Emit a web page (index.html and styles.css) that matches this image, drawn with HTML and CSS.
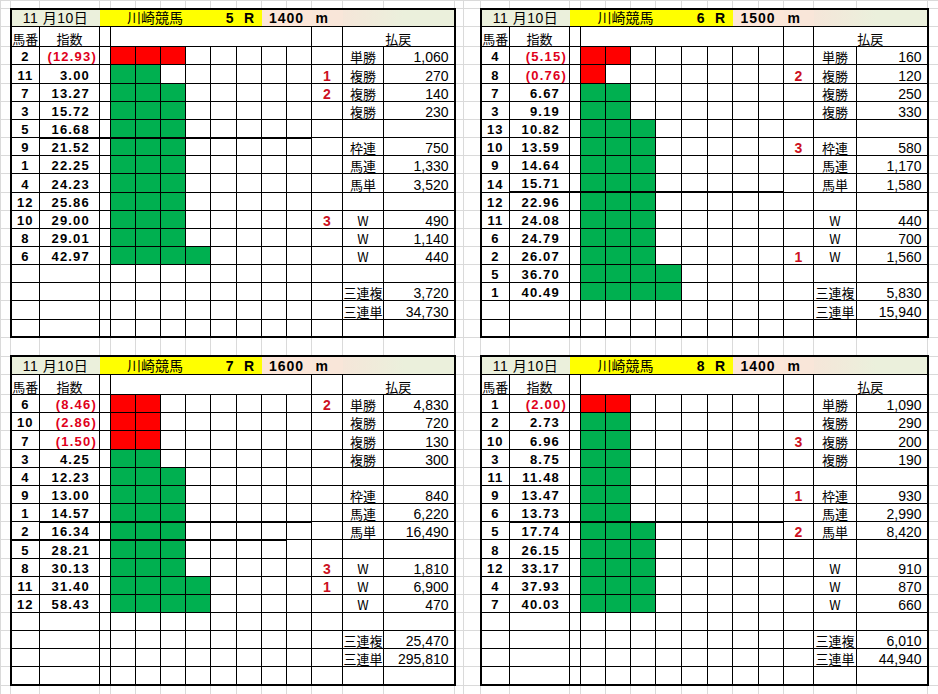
FILE: index.html
```html
<!DOCTYPE html>
<html lang="ja">
<head>
<meta charset="utf-8">
<title>川崎競馬 指数</title>
<link rel="stylesheet" href="styles.css">
</head>
<body>
<table class="sheet">
<colgroup>
<col class="c-m"><col class="c-no"><col class="c-ix"><col class="c-nr"><col class="c-b"><col class="c-b"><col class="c-b"><col class="c-b"><col class="c-b26"><col class="c-b"><col class="c-b"><col class="c-b"><col class="c-mk"><col class="c-lb"><col class="c-v">
<col class="c-g1"><col class="c-g2">
<col class="c-no"><col class="c-ix"><col class="c-nr"><col class="c-b"><col class="c-b"><col class="c-b"><col class="c-b26"><col class="c-b26"><col class="c-b"><col class="c-b26"><col class="c-b"><col class="c-mk2"><col class="c-lb2"><col class="c-v">
<col class="c-m2">
</colgroup>
<tbody>
<tr class="top"><td></td><td></td><td></td><td></td><td></td><td></td><td></td><td></td><td></td><td></td><td></td><td></td><td></td><td></td><td></td><td></td><td></td><td></td><td></td><td></td><td></td><td></td><td></td><td></td><td></td><td></td><td></td><td></td><td></td><td></td><td></td><td></td></tr>

<tr class="t">
<td></td>
<td class="date" colspan="2">11 月10日</td><td class="ven" colspan="5">川崎競馬</td><td class="rno">5</td><td class="rr">R</td><td class="dist" colspan="2">1400</td><td class="unit">m</td><td class="rest" colspan="2"></td>
<td></td><td></td>
<td class="date" colspan="2">11 月10日</td><td class="ven" colspan="5">川崎競馬</td><td class="rno">6</td><td class="rr">R</td><td class="dist" colspan="2">1500</td><td class="unit">m</td><td class="rest" colspan="2"></td>
<td></td>
</tr>
<tr class="h">
<td></td>
<td class="hn">馬番</td><td class="hx">指数</td><td class="hw"></td><td class="hb" colspan="8"></td><td class="hm"></td><td class="hp" colspan="2">払戻</td>
<td></td><td></td>
<td class="hn">馬番</td><td class="hx">指数</td><td class="hw"></td><td class="hb" colspan="8"></td><td class="hm"></td><td class="hp" colspan="2">払戻</td>
<td></td>
</tr>

<tr class="d">
<td></td>
<td>2</td><td class="neg">(12.93)</td><td></td>
<td class="r"></td><td class="r"></td><td class="r"></td><td></td><td></td><td></td><td></td><td></td>
<td></td><td>単勝</td><td>1,060</td>
<td></td><td></td>
<td>4</td><td class="neg">(5.15)</td><td></td>
<td class="r"></td><td class="r"></td><td></td><td></td><td></td><td></td><td></td><td></td>
<td></td><td>単勝</td><td>160</td>
<td></td>
</tr>
<tr class="d">
<td></td>
<td>11</td><td>3.00</td><td></td>
<td class="g"></td><td class="g"></td><td></td><td></td><td></td><td></td><td></td><td></td>
<td>1</td><td>複勝</td><td>270</td>
<td></td><td></td>
<td>8</td><td class="neg">(0.76)</td><td></td>
<td class="r"></td><td></td><td></td><td></td><td></td><td></td><td></td><td></td>
<td>2</td><td>複勝</td><td>120</td>
<td></td>
</tr>
<tr class="d">
<td></td>
<td>7</td><td>13.27</td><td></td>
<td class="g"></td><td class="g"></td><td class="g"></td><td></td><td></td><td></td><td></td><td></td>
<td>2</td><td>複勝</td><td>140</td>
<td></td><td></td>
<td>7</td><td>6.67</td><td></td>
<td class="g"></td><td class="g"></td><td></td><td></td><td></td><td></td><td></td><td></td>
<td></td><td>複勝</td><td>250</td>
<td></td>
</tr>
<tr class="d">
<td></td>
<td>3</td><td>15.72</td><td></td>
<td class="g"></td><td class="g"></td><td class="g"></td><td></td><td></td><td></td><td></td><td></td>
<td></td><td>複勝</td><td>230</td>
<td></td><td></td>
<td>3</td><td>9.19</td><td></td>
<td class="g"></td><td class="g"></td><td></td><td></td><td></td><td></td><td></td><td></td>
<td></td><td>複勝</td><td>330</td>
<td></td>
</tr>
<tr class="d">
<td></td>
<td>5</td><td class="s">16.68</td><td class="s"></td>
<td class="g s"></td><td class="g s"></td><td class="g s"></td><td class="s"></td><td class="s"></td><td class="s"></td><td class="s"></td><td class="s"></td>
<td></td><td></td><td></td>
<td></td><td></td>
<td>13</td><td>10.82</td><td></td>
<td class="g"></td><td class="g"></td><td class="g"></td><td></td><td></td><td></td><td></td><td></td>
<td></td><td></td><td></td>
<td></td>
</tr>
<tr class="d">
<td></td>
<td>9</td><td>21.52</td><td></td>
<td class="g"></td><td class="g"></td><td class="g"></td><td></td><td></td><td></td><td></td><td></td>
<td></td><td>枠連</td><td>750</td>
<td></td><td></td>
<td>10</td><td>13.59</td><td></td>
<td class="g"></td><td class="g"></td><td class="g"></td><td></td><td></td><td></td><td></td><td></td>
<td>3</td><td>枠連</td><td>580</td>
<td></td>
</tr>
<tr class="d">
<td></td>
<td>1</td><td>22.25</td><td></td>
<td class="g"></td><td class="g"></td><td class="g"></td><td></td><td></td><td></td><td></td><td></td>
<td></td><td>馬連</td><td>1,330</td>
<td></td><td></td>
<td>9</td><td>14.64</td><td></td>
<td class="g"></td><td class="g"></td><td class="g"></td><td></td><td></td><td></td><td></td><td></td>
<td></td><td>馬連</td><td>1,170</td>
<td></td>
</tr>
<tr class="d">
<td></td>
<td>4</td><td>24.23</td><td></td>
<td class="g"></td><td class="g"></td><td class="g"></td><td></td><td></td><td></td><td></td><td></td>
<td></td><td>馬単</td><td>3,520</td>
<td></td><td></td>
<td>14</td><td class="s">15.71</td><td class="s"></td>
<td class="g s"></td><td class="g s"></td><td class="g s"></td><td class="s"></td><td class="s"></td><td class="s"></td><td class="s"></td><td class="s"></td>
<td></td><td>馬単</td><td>1,580</td>
<td></td>
</tr>
<tr class="d">
<td></td>
<td>12</td><td>25.86</td><td></td>
<td class="g"></td><td class="g"></td><td class="g"></td><td></td><td></td><td></td><td></td><td></td>
<td></td><td></td><td></td>
<td></td><td></td>
<td>12</td><td>22.96</td><td></td>
<td class="g"></td><td class="g"></td><td class="g"></td><td></td><td></td><td></td><td></td><td></td>
<td></td><td></td><td></td>
<td></td>
</tr>
<tr class="d">
<td></td>
<td>10</td><td>29.00</td><td></td>
<td class="g"></td><td class="g"></td><td class="g"></td><td></td><td></td><td></td><td></td><td></td>
<td>3</td><td>W</td><td>490</td>
<td></td><td></td>
<td>11</td><td>24.08</td><td></td>
<td class="g"></td><td class="g"></td><td class="g"></td><td></td><td></td><td></td><td></td><td></td>
<td></td><td>W</td><td>440</td>
<td></td>
</tr>
<tr class="d">
<td></td>
<td>8</td><td>29.01</td><td></td>
<td class="g"></td><td class="g"></td><td class="g"></td><td></td><td></td><td></td><td></td><td></td>
<td></td><td>W</td><td>1,140</td>
<td></td><td></td>
<td>6</td><td>24.79</td><td></td>
<td class="g"></td><td class="g"></td><td class="g"></td><td></td><td></td><td></td><td></td><td></td>
<td></td><td>W</td><td>700</td>
<td></td>
</tr>
<tr class="d">
<td></td>
<td>6</td><td>42.97</td><td></td>
<td class="g"></td><td class="g"></td><td class="g"></td><td class="g"></td><td></td><td></td><td></td><td></td>
<td></td><td>W</td><td>440</td>
<td></td><td></td>
<td>2</td><td>26.07</td><td></td>
<td class="g"></td><td class="g"></td><td class="g"></td><td></td><td></td><td></td><td></td><td></td>
<td>1</td><td>W</td><td>1,560</td>
<td></td>
</tr>
<tr class="d">
<td></td>
<td></td><td></td><td></td>
<td></td><td></td><td></td><td></td><td></td><td></td><td></td><td></td>
<td></td><td></td><td></td>
<td></td><td></td>
<td>5</td><td>36.70</td><td></td>
<td class="g"></td><td class="g"></td><td class="g"></td><td class="g"></td><td></td><td></td><td></td><td></td>
<td></td><td></td><td></td>
<td></td>
</tr>
<tr class="d">
<td></td>
<td></td><td></td><td></td>
<td></td><td></td><td></td><td></td><td></td><td></td><td></td><td></td>
<td></td><td>三連複</td><td>3,720</td>
<td></td><td></td>
<td>1</td><td>40.49</td><td></td>
<td class="g"></td><td class="g"></td><td class="g"></td><td class="g"></td><td></td><td></td><td></td><td></td>
<td></td><td>三連複</td><td>5,830</td>
<td></td>
</tr>
<tr class="d">
<td></td>
<td></td><td></td><td></td>
<td></td><td></td><td></td><td></td><td></td><td></td><td></td><td></td>
<td></td><td>三連単</td><td>34,730</td>
<td></td><td></td>
<td></td><td></td><td></td>
<td></td><td></td><td></td><td></td><td></td><td></td><td></td><td></td>
<td></td><td>三連単</td><td>15,940</td>
<td></td>
</tr>
<tr class="d end">
<td></td>
<td></td><td></td><td></td>
<td></td><td></td><td></td><td></td><td></td><td></td><td></td><td></td>
<td></td><td></td><td></td>
<td></td><td></td>
<td></td><td></td><td></td>
<td></td><td></td><td></td><td></td><td></td><td></td><td></td><td></td>
<td></td><td></td><td></td>
<td></td>
</tr>

<tr class="gap"><td></td><td></td><td></td><td></td><td></td><td></td><td></td><td></td><td></td><td></td><td></td><td></td><td></td><td></td><td></td><td></td><td></td><td></td><td></td><td></td><td></td><td></td><td></td><td></td><td></td><td></td><td></td><td></td><td></td><td></td><td></td><td></td></tr>

<tr class="t">
<td></td>
<td class="date" colspan="2">11 月10日</td><td class="ven" colspan="5">川崎競馬</td><td class="rno">7</td><td class="rr">R</td><td class="dist" colspan="2">1600</td><td class="unit">m</td><td class="rest" colspan="2"></td>
<td></td><td></td>
<td class="date" colspan="2">11 月10日</td><td class="ven" colspan="5">川崎競馬</td><td class="rno">8</td><td class="rr">R</td><td class="dist" colspan="2">1400</td><td class="unit">m</td><td class="rest" colspan="2"></td>
<td></td>
</tr>
<tr class="h">
<td></td>
<td class="hn">馬番</td><td class="hx">指数</td><td class="hw"></td><td class="hb" colspan="8"></td><td class="hm"></td><td class="hp" colspan="2">払戻</td>
<td></td><td></td>
<td class="hn">馬番</td><td class="hx">指数</td><td class="hw"></td><td class="hb" colspan="8"></td><td class="hm"></td><td class="hp" colspan="2">払戻</td>
<td></td>
</tr>

<tr class="d">
<td></td>
<td>6</td><td class="neg">(8.46)</td><td></td>
<td class="r"></td><td class="r"></td><td></td><td></td><td></td><td></td><td></td><td></td>
<td>2</td><td>単勝</td><td>4,830</td>
<td></td><td></td>
<td>1</td><td class="neg">(2.00)</td><td></td>
<td class="r"></td><td class="r"></td><td></td><td></td><td></td><td></td><td></td><td></td>
<td></td><td>単勝</td><td>1,090</td>
<td></td>
</tr>
<tr class="d">
<td></td>
<td>10</td><td class="neg">(2.86)</td><td></td>
<td class="r"></td><td class="r"></td><td></td><td></td><td></td><td></td><td></td><td></td>
<td></td><td>複勝</td><td>720</td>
<td></td><td></td>
<td>2</td><td>2.73</td><td></td>
<td class="g"></td><td class="g"></td><td></td><td></td><td></td><td></td><td></td><td></td>
<td></td><td>複勝</td><td>290</td>
<td></td>
</tr>
<tr class="d">
<td></td>
<td>7</td><td class="neg">(1.50)</td><td></td>
<td class="r"></td><td class="r"></td><td></td><td></td><td></td><td></td><td></td><td></td>
<td></td><td>複勝</td><td>130</td>
<td></td><td></td>
<td>10</td><td>6.96</td><td></td>
<td class="g"></td><td class="g"></td><td></td><td></td><td></td><td></td><td></td><td></td>
<td>3</td><td>複勝</td><td>200</td>
<td></td>
</tr>
<tr class="d">
<td></td>
<td>3</td><td>4.25</td><td></td>
<td class="g"></td><td class="g"></td><td></td><td></td><td></td><td></td><td></td><td></td>
<td></td><td>複勝</td><td>300</td>
<td></td><td></td>
<td>3</td><td>8.75</td><td></td>
<td class="g"></td><td class="g"></td><td></td><td></td><td></td><td></td><td></td><td></td>
<td></td><td>複勝</td><td>190</td>
<td></td>
</tr>
<tr class="d">
<td></td>
<td>4</td><td>12.23</td><td></td>
<td class="g"></td><td class="g"></td><td class="g"></td><td></td><td></td><td></td><td></td><td></td>
<td></td><td></td><td></td>
<td></td><td></td>
<td>11</td><td>11.48</td><td></td>
<td class="g"></td><td class="g"></td><td></td><td></td><td></td><td></td><td></td><td></td>
<td></td><td></td><td></td>
<td></td>
</tr>
<tr class="d">
<td></td>
<td>9</td><td>13.00</td><td></td>
<td class="g"></td><td class="g"></td><td class="g"></td><td></td><td></td><td></td><td></td><td></td>
<td></td><td>枠連</td><td>840</td>
<td></td><td></td>
<td>9</td><td>13.47</td><td></td>
<td class="g"></td><td class="g"></td><td></td><td></td><td></td><td></td><td></td><td></td>
<td>1</td><td>枠連</td><td>930</td>
<td></td>
</tr>
<tr class="d">
<td></td>
<td>1</td><td class="s">14.57</td><td class="s"></td>
<td class="g s"></td><td class="g s"></td><td class="g s"></td><td class="s"></td><td class="s"></td><td class="s"></td><td class="s"></td><td class="s"></td>
<td></td><td>馬連</td><td>6,220</td>
<td></td><td></td>
<td>6</td><td class="s">13.73</td><td class="s"></td>
<td class="g s"></td><td class="g s"></td><td class="s"></td><td class="s"></td><td class="s"></td><td class="s"></td><td class="s"></td><td class="s"></td>
<td></td><td>馬連</td><td>2,990</td>
<td></td>
</tr>
<tr class="d">
<td></td>
<td class="s">2</td><td class="s">16.34</td><td class="s"></td>
<td class="g s"></td><td class="g s"></td><td class="g s"></td><td class="s"></td><td class="s"></td><td class="s"></td><td class="s"></td><td></td>
<td></td><td>馬単</td><td>16,490</td>
<td></td><td></td>
<td>5</td><td>17.74</td><td></td>
<td class="g"></td><td class="g"></td><td class="g"></td><td></td><td></td><td></td><td></td><td></td>
<td>2</td><td>馬単</td><td>8,420</td>
<td></td>
</tr>
<tr class="d">
<td></td>
<td>5</td><td>28.21</td><td></td>
<td class="g"></td><td class="g"></td><td class="g"></td><td></td><td></td><td></td><td></td><td></td>
<td></td><td></td><td></td>
<td></td><td></td>
<td>8</td><td>26.15</td><td></td>
<td class="g"></td><td class="g"></td><td class="g"></td><td></td><td></td><td></td><td></td><td></td>
<td></td><td></td><td></td>
<td></td>
</tr>
<tr class="d">
<td></td>
<td>8</td><td>30.13</td><td></td>
<td class="g"></td><td class="g"></td><td class="g"></td><td></td><td></td><td></td><td></td><td></td>
<td>3</td><td>W</td><td>1,810</td>
<td></td><td></td>
<td>12</td><td>33.17</td><td></td>
<td class="g"></td><td class="g"></td><td class="g"></td><td></td><td></td><td></td><td></td><td></td>
<td></td><td>W</td><td>910</td>
<td></td>
</tr>
<tr class="d">
<td></td>
<td>11</td><td>31.40</td><td></td>
<td class="g"></td><td class="g"></td><td class="g"></td><td class="g"></td><td></td><td></td><td></td><td></td>
<td>1</td><td>W</td><td>6,900</td>
<td></td><td></td>
<td>4</td><td>37.93</td><td></td>
<td class="g"></td><td class="g"></td><td class="g"></td><td></td><td></td><td></td><td></td><td></td>
<td></td><td>W</td><td>870</td>
<td></td>
</tr>
<tr class="d">
<td></td>
<td>12</td><td>58.43</td><td></td>
<td class="g"></td><td class="g"></td><td class="g"></td><td class="g"></td><td></td><td></td><td></td><td></td>
<td></td><td>W</td><td>470</td>
<td></td><td></td>
<td>7</td><td>40.03</td><td></td>
<td class="g"></td><td class="g"></td><td class="g"></td><td></td><td></td><td></td><td></td><td></td>
<td></td><td>W</td><td>660</td>
<td></td>
</tr>
<tr class="d">
<td></td>
<td></td><td></td><td></td>
<td></td><td></td><td></td><td></td><td></td><td></td><td></td><td></td>
<td></td><td></td><td></td>
<td></td><td></td>
<td></td><td></td><td></td>
<td></td><td></td><td></td><td></td><td></td><td></td><td></td><td></td>
<td></td><td></td><td></td>
<td></td>
</tr>
<tr class="d">
<td></td>
<td></td><td></td><td></td>
<td></td><td></td><td></td><td></td><td></td><td></td><td></td><td></td>
<td></td><td>三連複</td><td>25,470</td>
<td></td><td></td>
<td></td><td></td><td></td>
<td></td><td></td><td></td><td></td><td></td><td></td><td></td><td></td>
<td></td><td>三連複</td><td>6,010</td>
<td></td>
</tr>
<tr class="d">
<td></td>
<td></td><td></td><td></td>
<td></td><td></td><td></td><td></td><td></td><td></td><td></td><td></td>
<td></td><td>三連単</td><td>295,810</td>
<td></td><td></td>
<td></td><td></td><td></td>
<td></td><td></td><td></td><td></td><td></td><td></td><td></td><td></td>
<td></td><td>三連単</td><td>44,940</td>
<td></td>
</tr>
<tr class="d end">
<td></td>
<td></td><td></td><td></td>
<td></td><td></td><td></td><td></td><td></td><td></td><td></td><td></td>
<td></td><td></td><td></td>
<td></td><td></td>
<td></td><td></td><td></td>
<td></td><td></td><td></td><td></td><td></td><td></td><td></td><td></td>
<td></td><td></td><td></td>
<td></td>
</tr>

<tr class="bot"><td></td><td></td><td></td><td></td><td></td><td></td><td></td><td></td><td></td><td></td><td></td><td></td><td></td><td></td><td></td><td></td><td></td><td></td><td></td><td></td><td></td><td></td><td></td><td></td><td></td><td></td><td></td><td></td><td></td><td></td><td></td><td></td></tr>
</tbody>
</table>
</body>
</html>
```

FILE: styles.css
```css
html, body {
  margin: 0;
  padding: 0;
  background: #ffffff;
  overflow: hidden;
}

.sheet {
  border-collapse: collapse;
  table-layout: fixed;
  width: 938px;
  font-family: "Liberation Sans", "Noto Sans CJK JP", sans-serif;
  font-size: 14px;
  color: #000;
}

/* column widths */
.c-m { width: 10px; }
.c-no { width: 29px; }
.c-ix { width: 60px; }
.c-nr { width: 11px; }
.c-b { width: 25px; }
.c-b26 { width: 26px; }
.c-mk { width: 31px; }
.c-lb { width: 41px; }
.c-v { width: 71px; }
.c-g1 { width: 9px; }
.c-g2 { width: 17px; }
.c-mk2 { width: 30px; }
.c-lb2 { width: 43px; }
.c-m2 { width: 11px; }

/* row heights */
.top { height: 8px; }
.t { height: 18.3px; }
.h { height: 20px; }
.d { height: 18.16px; }
.gap { height: 19px; }
.bot { height: 10px; }

.sheet td {
  border: 1px solid #dadada;
  padding: 0;
  overflow: hidden;
  white-space: nowrap;
  vertical-align: bottom;
  line-height: 14px;
}

/* ---------- title row ---------- */
.t td.date, .t td.ven, .t td.rno, .t td.rr, .t td.dist, .t td.unit, .t td.rest {
  border-top: 2px solid #000;
  border-bottom: 1px solid #000;
  border-left: 0;
  border-right: 0;
  font-family: "Liberation Sans", "Noto Sans CJK JP", sans-serif;
  line-height: 15px;
}
.t td.date {
  border-left: 2px solid #000;
  background: #ebf0dc;
  text-align: center;
  font-size: 14px;
  letter-spacing: 0.5px;
}
.t td.ven {
  background: #ffff00;
  text-align: center;
  font-size: 14px;
}
.t td.rno {
  background: #ffff00;
  text-align: right;
  padding-right: 3px;
  font-weight: bold;
}
.t td.rr {
  background: #ffff00;
  text-align: center;
  font-weight: bold;
}
.t td.dist {
  background: #fce6d8;
  text-align: center;
  font-weight: bold;
  letter-spacing: 1px;
}
.t td.unit {
  background: #f9e6d9;
  text-align: left;
  padding-left: 4px;
  font-weight: bold;
}
.t td.rest {
  border-right: 2px solid #000;
  background: linear-gradient(to right, #f5e6d9, #ebf0dc 55%);
}

/* ---------- header row ---------- */
.h td.hn, .h td.hx, .h td.hw, .h td.hb, .h td.hm, .h td.hp {
  border: 1px solid #000;
  font-family: "Noto Sans CJK JP", sans-serif;
  font-size: 13px;
  text-align: center;
  line-height: 15px;
}
.h td.hn { border-left: 2px solid #000; }
.h td.hp { border-right: 2px solid #000; }

/* ---------- data rows ---------- */
.d td:nth-child(n+2):nth-child(-n+15),
.d td:nth-child(n+18):nth-child(-n+31) {
  border-color: #000;
}
.d td:nth-child(2), .d td:nth-child(18) {
  border-left: 2px solid #000;
  font-weight: bold;
  text-align: center;
  letter-spacing: 1px;
  font-size: 13px;
}
.d td:nth-child(3), .d td:nth-child(19) {
  font-weight: bold;
  text-align: right;
  padding-right: 9px;
  letter-spacing: 1.2px;
  font-size: 13px;
}
.d td:nth-child(13), .d td:nth-child(29) {
  color: #cc1122;
  font-weight: bold;
  text-align: center;
  font-size: 14px;
}
.d td:nth-child(14), .d td:nth-child(30) {
  font-family: "Noto Sans CJK JP", sans-serif;
  font-size: 13px;
  text-align: center;
}
.d td:nth-child(15), .d td:nth-child(31) {
  border-right: 2px solid #000;
  text-align: right;
  padding-right: 5px;
  font-size: 14px;
}
.d.end td:nth-child(n+2):nth-child(-n+15),
.d.end td:nth-child(n+18):nth-child(-n+31) {
  border-bottom: 2px solid #000;
}

.d td.neg {
  color: #e0001b;
  padding-right: 2px;
}
.d td.r { background: #ff0000; }
.d td.g { background: #00b050; }
.d td.s { border-bottom: 2px solid #000; }
```
